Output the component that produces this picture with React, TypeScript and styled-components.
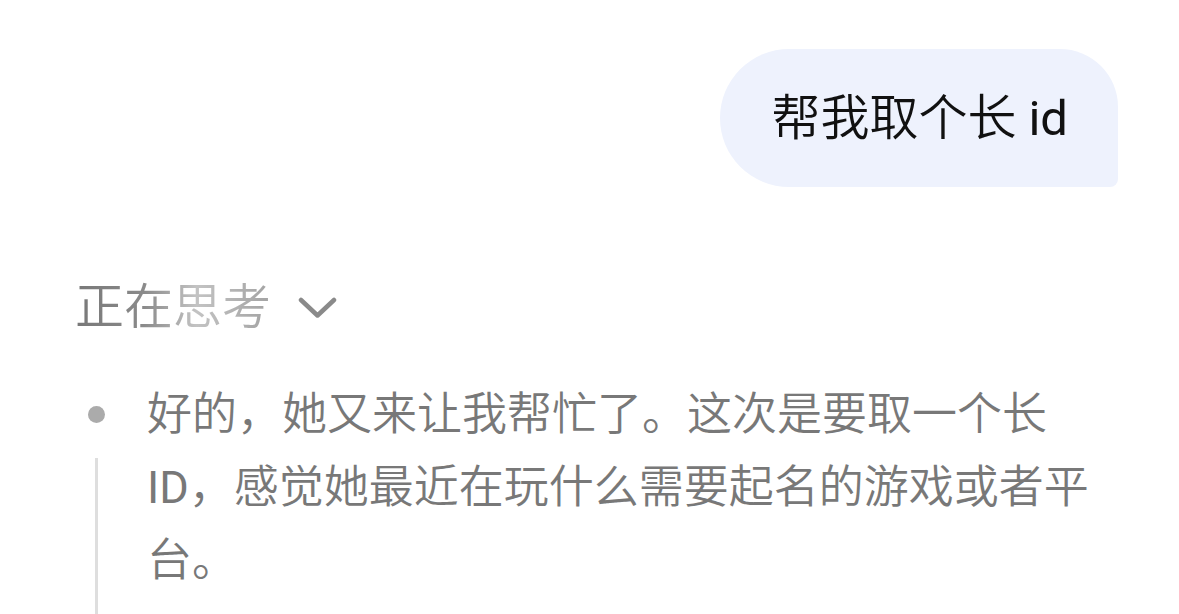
import styled, { createGlobalStyle } from "styled-components";

const GlobalStyle = createGlobalStyle`
  html, body {
    margin: 0;
    padding: 0;
    background: #ffffff;
  }
  body {
    font-family: Roboto, "Noto Sans CJK SC", sans-serif;
    overflow: hidden;
  }
`;

const Page = styled.div`
  width: 1179px;
  height: 614px;
  overflow: hidden;
  box-sizing: border-box;
  padding: 49px 61px 0 75px;
  display: flex;
  flex-direction: column;
`;

const UserRow = styled.div`
  display: flex;
  justify-content: flex-end;
`;

const Bubble = styled.div`
  height: 138px;
  box-sizing: border-box;
  padding: 0 50px 0 51px;
  display: flex;
  align-items: center;
  background: #eef2fd;
  border-radius: 69px 58px 8px 69px;
  color: #111111;
  font-size: 49px;
  font-weight: 350;
  line-height: 1;
  white-space: pre;
`;

/* Latin runs use the regular cut of Roboto, as in the source UI */
const Latin = styled.span`
  font-weight: 400;
`;

const ThinkingHeader = styled.button`
  margin-top: 91px;
  height: 60px;
  padding: 0;
  border: 0;
  background: none;
  display: flex;
  align-items: center;
  align-self: flex-start;
  font-family: inherit;
  cursor: pointer;
`;

const ShimmerText = styled.span`
  font-size: 49px;
  font-weight: 350;
  line-height: 60px;
  background: linear-gradient(
    90deg,
    #787878 0%,
    #8a8a8a 35%,
    #c3c3c3 62%,
    #a3a3a3 100%
  );
  -webkit-background-clip: text;
  background-clip: text;
  color: transparent;
`;

const Chevron = styled.svg`
  margin-left: 27px;
  width: 39px;
  height: 22px;
`;

const ThoughtItem = styled.div`
  margin-top: 40px;
  display: flex;
  flex: 1;
`;

const MarkerCol = styled.div`
  width: 42px;
  flex-shrink: 0;
  display: flex;
  flex-direction: column;
  align-items: center;
`;

const Dot = styled.span`
  margin-top: 28px;
  width: 17px;
  height: 17px;
  border-radius: 50%;
  background: #ababab;
`;

const Rail = styled.span`
  margin-top: 35px;
  width: 3px;
  flex: 1;
  background: #dedede;
`;

const ThoughtText = styled.p`
  margin: 0 0 0 30px;
  width: 955px;
  font-size: 45px;
  font-weight: 350;
  line-height: 73px;
  color: #787878;
  padding-bottom: 120px;
`;

export default function App() {
  return (
    <>
      <GlobalStyle />
      <Page>
        <UserRow>
          <Bubble>
            帮我取个长 <Latin>id</Latin>
          </Bubble>
        </UserRow>
        <ThinkingHeader>
          <ShimmerText>正在思考</ShimmerText>
          <Chevron viewBox="0 0 39 22" fill="none">
            <path
              d="M3 3 L19.5 18.5 L36 3"
              stroke="#8a8a8a"
              strokeWidth="4.5"
              strokeLinecap="round"
              strokeLinejoin="round"
            />
          </Chevron>
        </ThinkingHeader>
        <ThoughtItem>
          <MarkerCol>
            <Dot />
            <Rail />
          </MarkerCol>
          <ThoughtText>
            好的，她又来让我帮忙了。这次是要取一个长<Latin>ID</Latin>
            ，感觉她最近在玩什么需要起名的游戏或者平台。
          </ThoughtText>
        </ThoughtItem>
      </Page>
    </>
  );
}
